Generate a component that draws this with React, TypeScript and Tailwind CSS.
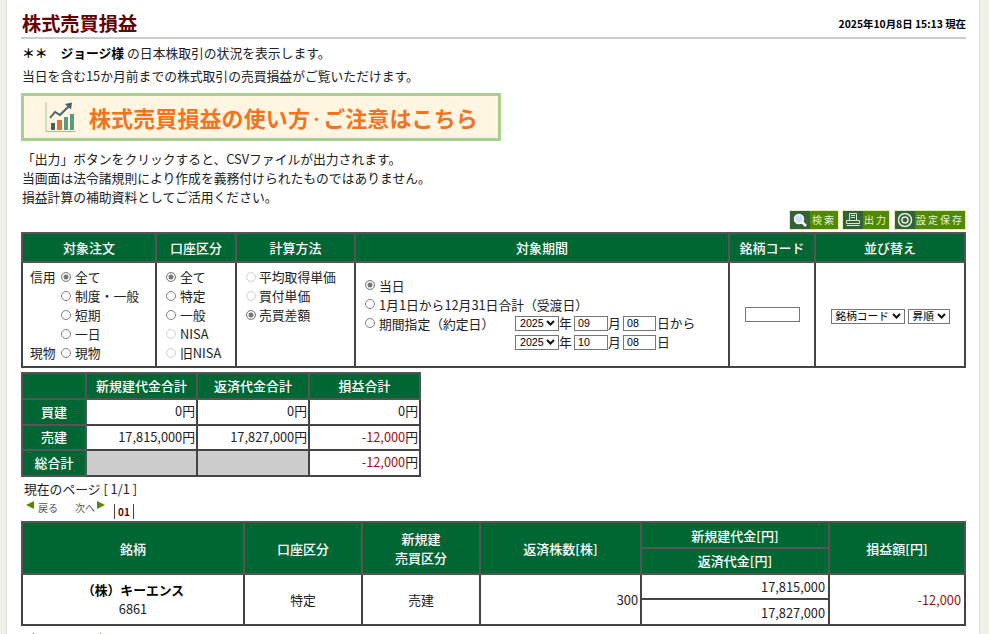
import type { ReactNode } from "react";

const GREEN = "bg-[#006633] text-white";

function Radio({ checked, disabled, tight }: { checked?: boolean; disabled?: boolean; tight?: boolean }) {
  return (
    <input
      type="radio"
      readOnly
      checked={!!checked}
      disabled={disabled}
      className={`appearance-none m-0 ${tight ? "mr-[3px]" : "mr-[4px]"} w-[10px] h-[10px] shrink-0 rounded-full border border-[#808080] bg-white disabled:border-[#cfcfcf] checked:bg-[#777] checked:shadow-[inset_0_0_0_1.5px_white] checked:border-[#808080] checked:disabled:border-[#808080]`}
    />
  );
}

function Opt({ label, checked, disabled, tight }: { label: string; checked?: boolean; disabled?: boolean; tight?: boolean }) {
  return (
    <div className="h-[19px] leading-[19px] whitespace-nowrap flex items-center">
      <Radio checked={checked} disabled={disabled} tight={tight} />
      <span>{label}</span>
    </div>
  );
}

function Th({ children, className = "", rowSpan }: { children?: ReactNode; className?: string; rowSpan?: number }) {
  return (
    <th rowSpan={rowSpan} className={`${GREEN} border-2 border-[#555] font-medium text-[13px] leading-[19px] text-center p-0 ${className}`}>
      {children}
    </th>
  );
}

function Td({ children, className = "", rowSpan }: { children?: ReactNode; className?: string; rowSpan?: number }) {
  return (
    <td rowSpan={rowSpan} className={`border-2 border-[#444] bg-white p-0 ${className}`}>
      {children}
    </td>
  );
}

function Sel({ label, className = "" }: { label: string; className?: string }) {
  return (
    <div className={`inline-flex items-center justify-between h-[15px] border border-[#767676] bg-white pl-[4px] pr-[3px] text-[10.67px] leading-none text-black font-['Liberation_Sans','Noto_Sans_CJK_JP',sans-serif] ${className}`}>
      <span className="whitespace-nowrap">{label}</span>
      <svg width="9" height="6" viewBox="0 0 9 6" fill="none" stroke="#111" strokeWidth="2">
        <path d="M1 1l3.5 3.5L8 1" />
      </svg>
    </div>
  );
}

function DateBox({ value, className = "" }: { value: string; className?: string }) {
  return (
    <input
      readOnly
      value={value}
      className={`border border-[#767676] h-[15px] px-[3px] text-[10.67px] text-black font-['Liberation_Sans',sans-serif] ${className}`}
    />
  );
}

function ToolButton({ icon, label, className = "" }: { icon: ReactNode; label: string; className?: string }) {
  return (
    <div className={`h-[20px] flex border border-[#e4ecb0] bg-[#4f8a00] ${className}`}>
      <div className="w-[20px] bg-[#33613a] flex items-center justify-center shrink-0">{icon}</div>
      <div className="flex-1 text-center text-[10px] leading-[18px] tracking-[2px] text-[#e8f0d8] whitespace-nowrap">{label}</div>
    </div>
  );
}

function BannerIcon() {
  return (
    <svg width="31" height="32" viewBox="0 0 31 32" className="shrink-0">
      <path d="M1 1v29.5h29.5" fill="none" stroke="#9cc394" strokeWidth="1" />
      <rect x="6" y="22" width="4" height="7" fill="#44606c" />
      <rect x="12" y="19" width="5" height="10" fill="#e0703c" />
      <rect x="19" y="16" width="4" height="13" fill="#5a9a7e" />
      <rect x="25" y="13" width="4" height="16" fill="#5a9a7e" />
      <path d="M5 17l5-6 5 3 9-9" fill="none" stroke="#44606c" strokeWidth="1.8" />
      <path d="M20 3l7-1.5-1 7z" fill="#44606c" />
    </svg>
  );
}

function Pager() {
  return (
    <div className="ml-[5px] -mt-[1px] h-[20px] flex items-center text-[10px] text-[#555] leading-none">
      <span className="w-0 h-0 border-y-[4px] border-y-transparent border-r-[8px] border-r-[#558b00] -mt-[6px]" />
      <span className="ml-[4px]">戻る</span>
      <span className="ml-[17px]">次へ</span>
      <span className="w-0 h-0 border-y-[4px] border-y-transparent border-l-[8px] border-l-[#558b00] -mt-[6px] ml-[2px]" />
      <span className="ml-[9px] h-[15px] mt-[7px] border-l border-r border-[#444] px-[3px] text-[10px] font-bold text-[#660000] flex items-center">01</span>
    </div>
  );
}

export default function App() {
  return (
    <div className="w-[989px] h-[634px] overflow-hidden bg-[#f0f0e8] font-['Noto_Sans_CJK_JP','Noto_Sans',sans-serif] text-[12.8px] text-[#222]">
      <div className="ml-[6px] w-[974px] h-[634px] bg-white border-l border-r border-[#ddd] pl-[14px] overflow-hidden">
        <div className="flex items-end justify-between h-[39px] border-b-2 border-[#ccc] w-[945px] pb-[1px]">
          <h1 className="ml-[1px] text-[19.2px] font-bold text-[#660000] leading-[26px]">株式売買損益</h1>
          <span className="text-[10.4px] font-bold text-black leading-[20px] mb-[2px]">2025年10月8日 15:13 現在</span>
        </div>
        <p className="ml-[1px] mt-[4px] leading-[20px]">
          <b className="text-black">＊＊　ジョージ様 </b>の日本株取引の状況を表示します。
        </p>
        <p className="ml-[1px] mt-[3px] leading-[20px]">当日を含む15か月前までの株式取引の売買損益がご覧いただけます。</p>
        <div className="mt-[7px] w-[480px] h-[48px] border-[3px] border-[#a9cf8e] bg-[#fff5e0] flex items-center pl-[21px] gap-[13px]">
          <BannerIcon />
          <span className="text-[22px] font-bold text-[#f37321] tracking-[0.1px] whitespace-nowrap">
            株式売買損益の使い方<span className="text-[13px] align-[3px]">・</span>ご注意はこちら
          </span>
        </div>
        <div className="ml-[1px] mt-[8px] leading-[19px]">
          <p>「出力」ボタンをクリックすると、CSVファイルが出力されます。</p>
          <p>当画面は法令諸規則により作成を義務付けられたものではありません。</p>
          <p>損益計算の補助資料としてご活用ください。</p>
        </div>

        <div className="mt-[4px] w-[945px] flex justify-end gap-[3px]">
          <ToolButton
            className="w-[50px]"
            label="検索"
            icon={
              <svg width="16" height="16" viewBox="0 0 16 16">
                <circle cx="7" cy="7" r="4.5" fill="#cfe0f4" stroke="#fff" strokeWidth="1.5" />
                <path d="M10 10l4 4" stroke="#fff" strokeWidth="2.5" />
              </svg>
            }
          />
          <ToolButton
            className="w-[48px]"
            label="出力"
            icon={
              <svg width="16" height="16" viewBox="0 0 16 16" fill="none" stroke="#dfe8d0" strokeWidth="1">
                <path d="M4.5 1.5h7v7h-7zM6 3.5h4M6 5.5h4M1.5 8.5h13v3h-13zM1.5 13.5h13" />
              </svg>
            }
          />
          <ToolButton
            className="w-[72px] ml-[1px]"
            label="設定保存"
            icon={
              <svg width="16" height="16" viewBox="0 0 16 16" fill="none" stroke="#e8eedc">
                <circle cx="8" cy="8" r="6.5" strokeWidth="1.5" />
                <circle cx="8" cy="8" r="3" strokeWidth="1.5" />
              </svg>
            }
          />
        </div>

        <table className="mt-[2px] w-[945px] border-collapse table-fixed">
          <colgroup>
            <col className="w-[134px]" />
            <col className="w-[80px]" />
            <col className="w-[119px]" />
            <col className="w-[374px]" />
            <col className="w-[86px]" />
            <col />
          </colgroup>
          <thead>
            <tr className="h-[29px]">
              <Th>対象注文</Th>
              <Th>口座区分</Th>
              <Th>計算方法</Th>
              <Th>対象期間</Th>
              <Th>銘柄コード</Th>
              <Th>並び替え</Th>
            </tr>
          </thead>
          <tbody>
            <tr className="h-[105px]">
              <Td className="align-top pt-[4px]">
                <div className="flex pl-[7px]">
                  <div className="w-[31px] flex flex-col justify-between">
                    <span className="leading-[19px]">信用</span>
                    <span className="leading-[19px]">現物</span>
                  </div>
                  <div>
                    <Opt label="全て" checked />
                    <Opt label="制度・一般" />
                    <Opt label="短期" />
                    <Opt label="一日" />
                    <Opt label="現物" />
                  </div>
                </div>
              </Td>
              <Td className="align-top pt-[4px] pl-[9px]">
                <Opt label="全て" checked />
                <Opt label="特定" />
                <Opt label="一般" />
                <Opt label="NISA" disabled />
                <Opt label="旧NISA" disabled />
              </Td>
              <Td className="align-top pt-[4px] pl-[9px]">
                <Opt label="平均取得単価" disabled tight />
                <Opt label="買付単価" disabled tight />
                <Opt label="売買差額" checked tight />
              </Td>
              <Td className="pl-[9px] pb-[2px]">
                <Opt label="当日" checked />
                <Opt label="1月1日から12月31日合計（受渡日）" />
                <div className="flex">
                  <div className="w-[150px]">
                    <Opt label="期間指定（約定日）" />
                  </div>
                  <div>
                    <div className="h-[19px] flex items-center">
                      <Sel label="2025" className="w-[44px]" />
                      <span className="w-[15px]">年</span>
                      <DateBox value="09" className="w-[34px]" />
                      <span className="w-[15px]">月</span>
                      <DateBox value="08" className="w-[33px]" />
                      <span className="ml-[1px]">日から</span>
                    </div>
                    <div className="h-[19px] flex items-center">
                      <Sel label="2025" className="w-[44px]" />
                      <span className="w-[15px]">年</span>
                      <DateBox value="10" className="w-[34px]" />
                      <span className="w-[15px]">月</span>
                      <DateBox value="08" className="w-[33px]" />
                      <span className="ml-[1px]">日</span>
                    </div>
                  </div>
                </div>
              </Td>
              <Td className="text-center pb-[3px]">
                <input readOnly className="w-[55px] h-[15px] border border-[#767676] align-middle" />
              </Td>
              <Td className="pt-[3px]">
                <div className="flex justify-center gap-[3px]">
                  <Sel label="銘柄コード" className="w-[74px]" />
                  <Sel label="昇順" className="w-[42px]" />
                </div>
              </Td>
            </tr>
          </tbody>
        </table>

        <table className="mt-[4px] w-[398px] border-collapse table-fixed">
          <colgroup>
            <col className="w-[64px]" />
            <col className="w-[111px]" />
            <col className="w-[112px]" />
            <col className="w-[111px]" />
          </colgroup>
          <tbody>
            <tr className="h-[26px]">
              <Th className="pb-[2px]" />
              <Th className="pb-[2px]">新規建代金合計</Th>
              <Th className="pb-[2px]">返済代金合計</Th>
              <Th className="pb-[2px]">損益合計</Th>
            </tr>
            <tr className="h-[26px]">
              <Th className="pb-[2px]">買建</Th>
              <Td className="text-right pr-[1px] pb-[2px]">0円</Td>
              <Td className="text-right pr-[1px] pb-[2px]">0円</Td>
              <Td className="text-right pr-[1px] pb-[2px]">0円</Td>
            </tr>
            <tr className="h-[25px]">
              <Th className="pb-[2px]">売建</Th>
              <Td className="text-right pr-[1px] pb-[2px]">17,815,000円</Td>
              <Td className="text-right pr-[1px] pb-[2px]">17,827,000円</Td>
              <Td className="text-right pr-[1px] pb-[2px]">
                <span className="text-[#a01010]">-12,000</span>円
              </Td>
            </tr>
            <tr className="h-[26px]">
              <Th className="pb-[2px]">総合計</Th>
              <td className="border-2 border-[#444] bg-[#cccccc]" />
              <td className="border-2 border-[#444] bg-[#cccccc]" />
              <Td className="text-right pr-[1px] pb-[2px]">
                <span className="text-[#a01010]">-12,000</span>円
              </Td>
            </tr>
          </tbody>
        </table>

        <div className="ml-[3px] mt-[2px] leading-[20px]">現在のページ [ 1/1 ]</div>
        <Pager />

        <table className="mt-[3px] w-[945px] border-collapse table-fixed">
          <colgroup>
            <col className="w-[222px]" />
            <col className="w-[118px]" />
            <col className="w-[118px]" />
            <col className="w-[161px]" />
            <col className="w-[188px]" />
            <col />
          </colgroup>
          <tbody>
            <tr className="h-[26px]">
              <Th rowSpan={2}>銘柄</Th>
              <Th rowSpan={2}>口座区分</Th>
              <Th rowSpan={2}>
                新規建
                <br />
                売買区分
              </Th>
              <Th rowSpan={2}>返済株数[株]</Th>
              <Th>新規建代金[円]</Th>
              <Th rowSpan={2}>損益額[円]</Th>
            </tr>
            <tr className="h-[26px]">
              <Th className="pb-[1px]">返済代金[円]</Th>
            </tr>
            <tr className="h-[25px]">
              <Td rowSpan={2} className="text-center leading-[19px] pb-[2px]">
                <b className="text-black">（株）キーエンス</b>
                <br />
                6861
              </Td>
              <Td rowSpan={2} className="text-center">特定</Td>
              <Td rowSpan={2} className="text-center">売建</Td>
              <Td rowSpan={2} className="text-right pr-[2px]">300</Td>
              <Td className="text-right pr-[3px]">17,815,000</Td>
              <Td rowSpan={2} className="text-right pr-[3px] text-[#a01010]">-12,000</Td>
            </tr>
            <tr className="h-[26px]">
              <Td className="text-right pr-[3px] pt-[2px]">17,827,000</Td>
            </tr>
          </tbody>
        </table>
        <div className="mt-[7px] ml-[5px] flex w-[82px] justify-between">
          <span className="w-0 h-0 border-y-[4px] border-y-transparent border-r-[8px] border-r-[#558b00]" />
          <span className="w-0 h-0 border-y-[4px] border-y-transparent border-l-[8px] border-l-[#558b00]" />
        </div>
      </div>
    </div>
  );
}
